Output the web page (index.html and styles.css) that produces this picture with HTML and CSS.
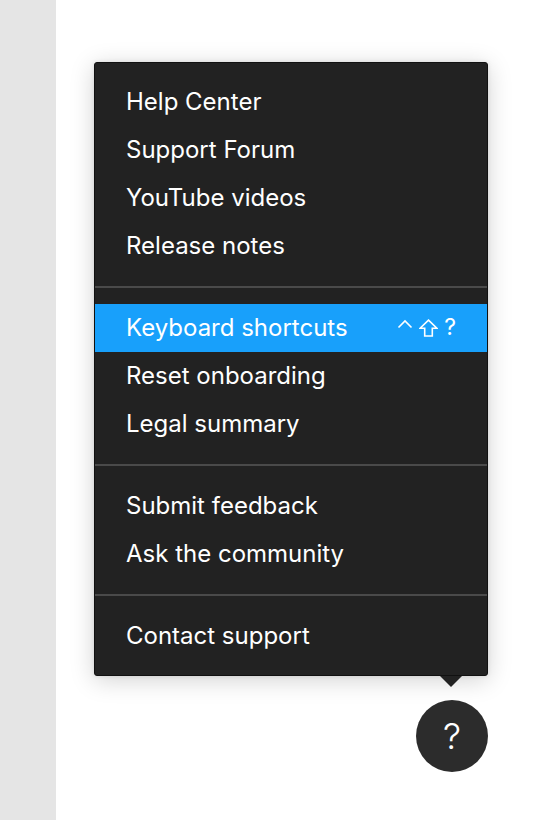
FILE: index.html
```html
<!DOCTYPE html>
<html>
<head>
<meta charset="utf-8">
<link rel="stylesheet" href="styles.css">
</head>
<body>
<div class="sidebar"></div>
<div class="main">
  <div class="menu">
    <div class="group">
      <div class="item">Help Center</div>
      <div class="item">Support Forum</div>
      <div class="item">YouTube videos</div>
      <div class="item">Release notes</div>
    </div>
    <div class="sep"></div>
    <div class="group">
      <div class="item active"><span>Keyboard shortcuts</span>
        <span class="keys">
          <svg class="caret" width="16" height="10" viewBox="0 0 16 10"><path d="M1.5 8.5 L8 2 L14.5 8.5" fill="none" stroke="#fff" stroke-width="1.6"/></svg>
          <svg class="shift" width="19" height="18" viewBox="0 0 19 18"><path d="M9.5 1.1 L17.9 9.3 L13.3 9.3 L13.3 17 L5.7 17 L5.7 9.3 L1.1 9.3 Z" fill="none" stroke="#fff" stroke-width="1.6" stroke-linejoin="miter"/></svg>
          <span class="q">?</span>
        </span>
      </div>
      <div class="item">Reset onboarding</div>
      <div class="item">Legal summary</div>
    </div>
    <div class="sep"></div>
    <div class="group">
      <div class="item">Submit feedback</div>
      <div class="item">Ask the community</div>
    </div>
    <div class="sep"></div>
    <div class="group">
      <div class="item">Contact support</div>
    </div>
  </div>
  <div class="pointer"></div>
  <div class="help">?</div>
</div>
</body>
</html>
```
FILE: styles.css
```css
html, body {
  margin: 0;
  padding: 0;
  height: 100%;
}
body {
  display: flex;
  font-family: Inter, "Noto Sans", sans-serif;
  background: #fff;
}
.sidebar {
  width: 56px;
  background: #e5e5e5;
  flex: none;
}
.main {
  flex: 1;
  display: flex;
  flex-direction: column;
  align-items: flex-end;
  padding: 62px 48px 0 0;
}
.menu {
  width: 394px;
  box-sizing: border-box;
  background: #222222;
  border: 1px solid #111;
  border-radius: 3px;
  padding: 15px 0;
  box-shadow: 0 4px 24px rgba(0,0,0,0.18), 0 0 4px rgba(0,0,0,0.1);
}
.item {
  height: 48px;
  box-sizing: border-box;
  display: flex;
  align-items: center;
  justify-content: space-between;
  padding: 0 31px 2px;
  color: #fff;
  font-size: 24px;
  letter-spacing: 0;
}
.item.active {
  background: #18a0fb;
}
.keys {
  display: flex;
  align-items: center;
  gap: 6px;
}
.caret { margin-top: -6px; }
.shift { margin-top: 1px; }
.q { font-size: 23px; }
.sep {
  height: 2px;
  background: #4a4a4a;
  margin: 16px 0;
}
.pointer {
  width: 0;
  height: 0;
  border-left: 11px solid transparent;
  border-right: 11px solid transparent;
  border-top: 11px solid #222222;
  margin-right: 26px;
}
.help {
  margin-top: 13px;
  width: 72px;
  height: 72px;
  border-radius: 50%;
  background: #2c2c2c;
  color: #fff;
  font-size: 36px;
  font-weight: 300;
  display: flex;
  align-items: center;
  justify-content: center;
  font-family: Inter, sans-serif;
}
```
